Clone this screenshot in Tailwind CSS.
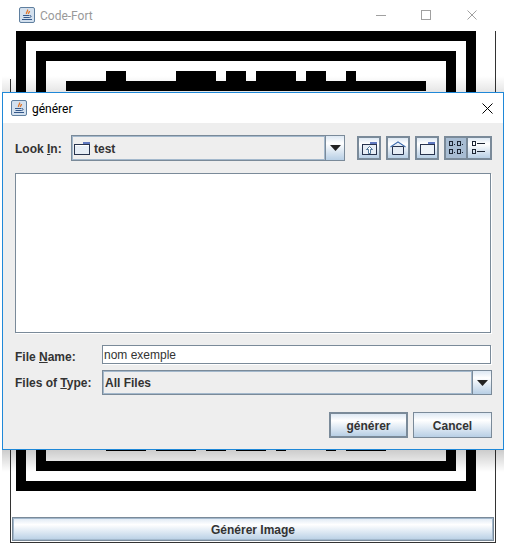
<!DOCTYPE html>
<html>
<head>
<meta charset="utf-8">
<script src="https://cdn.jsdelivr.net/npm/@tailwindcss/browser@4"></script>
</head>
<body class="bg-white">
<div class="relative w-[507px] h-[544px] overflow-hidden bg-white font-['Liberation_Sans',sans-serif]">

  <!-- main window -->
  <div class="absolute left-[10px] top-0 w-[486px] h-[543px] flex flex-col">
    <div class="h-[31px] shrink-0 flex items-center">
      <svg class="ml-[9px] mb-[1px] w-[16px] h-[16px]" viewBox="0 0 16 16">
        <rect x="0.5" y="0.5" width="15" height="15" rx="1.5" fill="#d3e0ee" stroke="#5f7f9f"/>
        <path d="M8.5 2.500c1 1.500-1.800 2.500-1 4.500M10.500 4c0 1.500-1.500 2-1 3" fill="none" stroke="#e2762a" stroke-width="1.300"/>
        <path d="M4 8.500h6.500M4.500 10.500h6M3 12.500h10" fill="none" stroke="#34588a" stroke-width="1"/>
        <path d="M11 8.500c1.500 0 1.500 2-.5 2" fill="none" stroke="#34588a"/>
      </svg>
      <span class="ml-[5px] font-['Roboto',sans-serif] text-[12px] text-[#999999]">Code-Fort</span>
      <div class="ml-auto flex items-center mr-[19px] mb-[1px]">
        <svg class="w-[10px] h-[10px]" viewBox="0 0 10 10"><path d="M0 5.500h10" stroke="#a0a0a0"/></svg>
        <svg class="ml-[35px] w-[10px] h-[10px]" viewBox="0 0 10 10"><rect x="0.500" y="0.500" width="9" height="9" fill="none" stroke="#a0a0a0"/></svg>
        <svg class="ml-[36px] w-[10px] h-[10px]" viewBox="0 0 10 10"><path d="M0.500 0.500l9 9M9.500 0.500l-9 9" stroke="#a0a0a0"/></svg>
      </div>
    </div>
    <div class="relative flex-1 flex flex-col border-r border-b border-[#333333] bg-white">
      <div class="absolute left-0 top-[48px] bottom-0 w-px bg-[#333333]"></div>
      <div class="flex-1 relative pl-[6px]">
        <svg class="block" width="460" height="460" viewBox="0 0 460 460" shape-rendering="crispEdges">
          <rect width="460" height="460" fill="#000"/>
          <rect x="10" y="10" width="440" height="440" fill="#fff"/>
          <rect x="20" y="20" width="420" height="420" fill="#000"/>
          <rect x="30" y="30" width="400" height="400" fill="#fff"/>
          <path d="M90 40h20v10h-20zM160 40h40v10h-40zM210 40h20v10h-20zM240 40h40v10h-40zM290 40h20v10h-20zM330 40h10v10h-10z" fill="#000"/>
          <rect x="50" y="50" width="360" height="10" fill="#000"/>
          <rect x="60" y="60" width="340" height="10" fill="#fff"/>
          <path d="M90 400h40v20h-40zM140 400h40v20h-40zM190 400h20v20h-20zM220 400h30v20h-30zM260 400h10v20h-10zM310 400h10v20h-10zM330 400h40v20h-40z" fill="#000"/>
        </svg>
      </div>
      <button class="ml-[2px] mr-[1px] mb-[1px] h-[24px] shrink-0 border border-[#7a8a99] shadow-[inset_0_0_0_1px_#a3b8cc] bg-gradient-to-b from-[#dde8f3] via-white via-30% to-[#b8cfe5] text-[12px] font-bold text-[#333333] pt-[1px]">Générer Image</button>
    </div>
  </div>

  <!-- dialog shadow -->
  <div class="absolute left-[2px] top-[76px] w-[502px] h-[16px] bg-gradient-to-b from-transparent to-black/10"></div>
  <div class="absolute left-[2px] top-[450px] w-[502px] h-[22px] bg-gradient-to-b from-black/20 to-transparent"></div>

  <!-- dialog -->
  <div class="absolute left-[2px] top-[92px] w-[502px] h-[358px] border border-[#1f88d8] bg-[#eeeeee] flex flex-col">
    <div class="h-[30px] shrink-0 bg-white flex items-center">
      <svg class="ml-[8px] w-[16px] h-[16px]" viewBox="0 0 16 16">
        <rect x="0.5" y="0.5" width="15" height="15" rx="1.5" fill="#d3e0ee" stroke="#5f7f9f"/>
        <path d="M8.5 2.500c1 1.500-1.800 2.500-1 4.500M10.500 4c0 1.500-1.500 2-1 3" fill="none" stroke="#e2762a" stroke-width="1.300"/>
        <path d="M4 8.500h6.500M4.500 10.500h6M3 12.500h10" fill="none" stroke="#34588a" stroke-width="1"/>
        <path d="M11 8.500c1.500 0 1.500 2-.5 2" fill="none" stroke="#34588a"/>
      </svg>
      <span class="ml-[5px] pt-[1px] font-['Roboto',sans-serif] text-[12px] text-black">générer</span>
      <svg class="ml-auto mr-[10px] w-[11px] h-[11px]" viewBox="0 0 11 11"><path d="M0.500 0.500l10 10M10.500 0.500l-10 10" stroke="#000"/></svg>
    </div>

    <div class="flex-1 flex flex-col pl-[12px] pr-[11px] text-[12px] font-bold text-[#333333]">
      <!-- look in row -->
      <div class="mt-[12px] h-[26px] flex items-center">
        <span class="w-[56px] pt-[1px]">Look <u>I</u>n:</span>
        <div class="w-[255px] h-[26px] border border-[#7a8a99] shadow-[inset_0_0_0_1px_#a3b8cc] bg-[#eeeeee] flex items-center">
          <svg class="ml-[2px] w-[16px] h-[13px]" viewBox="0 0 16 13" shape-rendering="crispEdges">
            <path d="M9 0h7v2h-7z" fill="#5f78c0"/>
            <path d="M0.500 2.500h15v10h-15z" fill="#e6edf5" stroke="#27334d"/>
            <path d="M1 3.500h14" stroke="#fff"/>
          </svg>
          <span class="ml-[4px] pt-[1px]">test</span>
        </div>
        <div class="w-[19px] h-[26px] border border-l-0 border-[#7a8a99] bg-gradient-to-b from-[#dde8f3] via-white via-30% to-[#b8cfe5] flex items-center justify-center">
          <svg class="w-[11px] h-[6px]" viewBox="0 0 11 6"><path d="M0 0h11l-5.500 6z" fill="#222"/></svg>
        </div>
        <div class="ml-[12px] w-[24px] h-[24px] border-2 border-[#7a8a99] bg-gradient-to-b from-[#dde8f3] via-white via-30% to-[#b8cfe5] flex items-center justify-center">
          <svg class="w-[15px] h-[13px]" viewBox="0 0 15 13" shape-rendering="crispEdges">
            <path d="M8 0h7v2h-7z" fill="#5f78c0"/>
            <path d="M0.500 2.500h14v10h-14z" fill="#e6edf5" stroke="#27334d"/>
            <path d="M7.500 4.500l-3 3h2v4h2v-4h2z" fill="#fff" stroke="#27557f" stroke-width="0.800" shape-rendering="auto"/>
          </svg>
        </div>
        <div class="ml-[5px] w-[24px] h-[24px] border-2 border-[#7a8a99] bg-gradient-to-b from-[#dde8f3] via-white via-30% to-[#b8cfe5] flex items-center justify-center">
          <svg class="w-[16px] h-[14px]" viewBox="0 0 16 14">
            <path d="M0.500 6l7.500-5 7.500 5" fill="none" stroke="#3f6db0" stroke-width="1.200"/>
            <path d="M2.500 5.500l5.500-3.500 5.500 3.500" fill="#e6edf5"/>
            <path d="M2.500 5.500h11v8h-11z" fill="#e6edf5" stroke="#27334d"/>
          </svg>
        </div>
        <div class="ml-[5px] w-[24px] h-[24px] border-2 border-[#7a8a99] bg-gradient-to-b from-[#dde8f3] via-white via-30% to-[#b8cfe5] flex items-center justify-center">
          <svg class="w-[15px] h-[13px]" viewBox="0 0 15 13" shape-rendering="crispEdges">
            <path d="M8 0h7v2h-7z" fill="#5f78c0"/>
            <path d="M0.500 2.500h14v10h-14z" fill="#eef3f8" stroke="#27334d"/>
          </svg>
        </div>
        <div class="ml-[5px] w-[24px] h-[24px] border-2 border-[#7a8a99] bg-[#a8bdd3] flex items-center justify-center">
          <svg class="w-[16px] h-[14px]" viewBox="0 0 16 14" fill="none" stroke="#1c2533">
            <rect x="1.500" y="0.500" width="3" height="4"/><rect x="9.500" y="0.500" width="3" height="4"/>
            <rect x="1.500" y="8.500" width="3" height="4"/><rect x="9.500" y="8.500" width="3" height="4"/>
            <path d="M6 3.500h1M14 3.500h1M6 11.500h1M14 11.500h1"/>
          </svg>
        </div>
        <div class="w-[24px] h-[24px] border-2 border-l-0 border-[#7a8a99] bg-gradient-to-b from-[#dde8f3] via-white via-30% to-[#b8cfe5] flex items-center justify-center">
          <svg class="w-[16px] h-[14px]" viewBox="0 0 16 14" fill="none" stroke="#1c2533">
            <rect x="1.500" y="0.500" width="3" height="4"/><rect x="1.500" y="8.500" width="3" height="4"/>
            <path d="M6 2.500h8M6 10.500h8"/>
          </svg>
        </div>
      </div>

      <!-- file list -->
      <div class="mt-[12px] w-[476px] h-[160px] border border-[#7a8a99] shadow-[1px_1px_0_#ffffff] bg-white"></div>

      <!-- file name -->
      <div class="mt-[12px] h-[20px] flex items-start">
        <span class="w-[87px] pt-[3px]">File <u>N</u>ame:</span>
        <div class="w-[389px] h-[19px] border border-[#7a8a99] shadow-[1px_1px_0_#ffffff] bg-white flex items-center pl-[1px] font-normal pt-[1px]">nom exemple</div>
      </div>

      <!-- files of type -->
      <div class="mt-[5px] h-[25px] flex items-center">
        <span class="w-[87px] pt-[1px]">Files of <u>T</u>ype:</span>
        <div class="flex-1 h-[25px] border border-[#7a8a99] shadow-[inset_0_0_0_1px_#a3b8cc] bg-[#eeeeee] flex items-center pl-[2px] pt-[1px]">All Files</div>
        <div class="w-[19px] h-[25px] border border-l-0 border-[#7a8a99] bg-gradient-to-b from-[#dde8f3] via-white via-30% to-[#b8cfe5] flex items-center justify-center">
          <svg class="w-[11px] h-[6px]" viewBox="0 0 11 6"><path d="M0 0h11l-5.500 6z" fill="#222"/></svg>
        </div>
      </div>

      <!-- buttons -->
      <div class="mt-[17px] flex justify-end gap-[5px]">
        <button class="w-[79px] h-[26px] border-2 border-[#7a8a99] bg-gradient-to-b from-[#dde8f3] via-white via-30% to-[#b8cfe5] font-bold text-[#333333] pt-[1px]">générer</button>
        <button class="w-[79px] h-[26px] border border-[#7a8a99] bg-gradient-to-b from-[#dde8f3] via-white via-30% to-[#b8cfe5] font-bold text-[#333333] pt-[1px]">Cancel</button>
      </div>
    </div>
  </div>
</div>
</body>
</html>
